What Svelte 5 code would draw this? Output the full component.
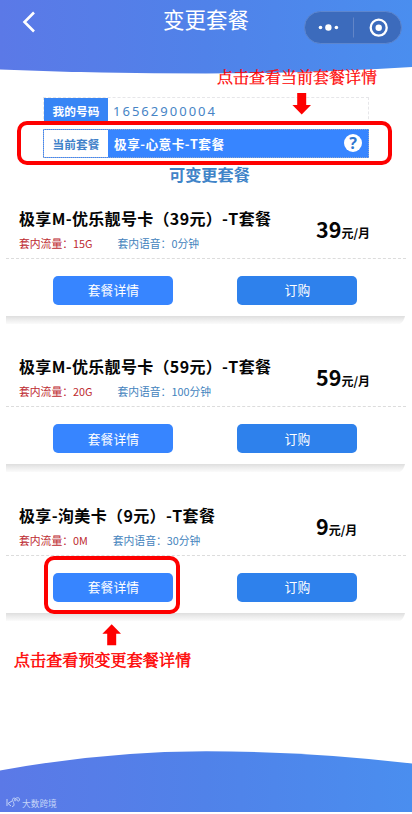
<script>
  const plans = [
    { name: '极享M-优乐靓号卡（39元）-T套餐', width: 252, data: '15G', voice: '0分钟', price: '39' },
    { name: '极享M-优乐靓号卡（59元）-T套餐', width: 252, data: '20G', voice: '100分钟', price: '59' },
    { name: '极享-洵美卡（9元）-T套餐', width: 196, data: '0M', voice: '30分钟', price: '9' }
  ];
</script>

<div class="page">
  <svg class="curve top" width="412" height="74" viewBox="0 0 412 74">
    <defs>
      <linearGradient id="sky" x1="0" y1="0" x2="1" y2="0">
        <stop offset="0" stop-color="#5b79e7" />
        <stop offset="0.5" stop-color="#5082e9" />
        <stop offset="1" stop-color="#4a8eef" />
      </linearGradient>
    </defs>
    <path d="M0 0H412V67Q310 73.5 206 73.5Q100 73.5 0 69.5Z" fill="url(#sky)" />
  </svg>
  <svg class="curve bottom" width="412" height="62" viewBox="0 0 412 62">
    <path d="M0 20.5Q104 1.3 206 1.3Q308 1.3 412 13.5V62H0Z" fill="url(#sky)" />
  </svg>

  <header>
    <svg class="back" width="14" height="22" viewBox="0 0 14 22">
      <path d="M12 1.5L2.5 11L12 20.5" fill="none" stroke="#fff" stroke-width="2.6" />
    </svg>
    <h1>变更套餐</h1>
    <svg class="capsule" width="98" height="33" viewBox="0 0 98 33">
      <rect x=".5" y=".5" width="97" height="32" rx="16" fill="#3c6bbc" stroke="#5d86ce" />
      <circle cx="16.5" cy="16.5" r="1.8" fill="#fff" />
      <circle cx="24.4" cy="16.5" r="3.2" fill="#fff" />
      <circle cx="32.4" cy="16.5" r="1.8" fill="#fff" />
      <path d="M49.5 6.5V26.5" stroke="#6285c7" />
      <circle cx="74.7" cy="16.7" r="8" fill="none" stroke="#fff" stroke-width="2.3" />
      <circle cx="74.7" cy="16.7" r="3.2" fill="#fff" />
    </svg>
  </header>

  <section class="account">
    <div class="row number">
      <span class="label">我的号码</span>
      <span class="value">16562900004</span>
    </div>
    <div class="row current">
      <span class="label">当前套餐</span>
      <span class="value">极享-心意卡-T套餐</span>
      <span class="help">?</span>
    </div>
  </section>

  <h2>可变更套餐</h2>

  <main>
    {#each plans as plan}
      <article>
        <div class="info">
          <div class="text">
            <svg class="name" width="254" height="24">
              <text x="0" y="18" textLength={plan.width} lengthAdjust="spacing">{plan.name}</text>
            </svg>
            <div class="meta">
              <span class="data">套内流量：{plan.data}</span>
              <span class="voice">套内语音：{plan.voice}</span>
            </div>
          </div>
          <div class="price"><b>{plan.price}</b>元/月</div>
        </div>
        <div class="actions">
          <button>套餐详情</button>
          <button class="order">订购</button>
        </div>
        <svg class="shade" width="400" height="8" viewBox="0 0 400 8">
          <defs>
            <linearGradient id="fade" x1="0" y1="0" x2="0" y2="1">
              <stop offset="0" stop-color="#dedede" />
              <stop offset=".4" stop-color="#ebebeb" />
              <stop offset="1" stop-color="#fbfbfb" />
            </linearGradient>
          </defs>
          <path d="M0 0H399Q398 5 394 8H0Z" fill="url(#fade)" />
        </svg>
      </article>
    {/each}
  </main>

  <div class="note note-top">点击查看当前套餐详情</div>
  <svg class="arrow down" width="20" height="22" viewBox="0 0 20 22">
    <path d="M5.2 0H14.2V12H19L9.7 21.5L.4 12H5.2Z" fill="#fe0000" />
  </svg>
  <div class="frame frame-top"></div>
  <div class="frame frame-bottom"></div>
  <svg class="arrow up" width="20" height="22" viewBox="0 0 20 22">
    <path d="M5.2 21.3H14.2V9.7H19L9.7 .3L.4 9.7H5.2Z" fill="#fe0000" />
  </svg>
  <div class="note note-bottom">点击查看预变更套餐详情</div>

  <div class="mark">
    <svg width="15" height="11" viewBox="0 0 15 11">
      <path d="M1 2V9M6 4L2 6.5L5 9M6 9.5C9 9.5 8 6 7 4.5C5 1 9 0 10 2.5C10 5 7 4 9 2C11 0 14 .5 13.5 3C13 5 10.5 4 11 2" fill="none" stroke="#c5d5f8" />
    </svg>
    <span>大数跨境</span>
  </div>
</div>

<style>
  :global(body) { margin: 0; background: #fff; }
  .page {
    position: relative;
    width: 412px;
    height: 814px;
    overflow: hidden;
    background: #fff;
    font-family: "Noto Sans CJK SC", sans-serif;
  }
  .curve { position: absolute; left: 0; display: block; }
  .top { top: 0; }
  .bottom { top: 750px; }
  header {
    position: relative;
    height: 97px;
    display: flex;
    align-items: flex-start;
  }
  .back { margin: 11px 0 0 22px; }
  h1 {
    margin: 3px 0 0 127px;
    width: 86px;
    font-size: 21.5px;
    line-height: 31px;
    font-weight: 400;
    color: #fff;
    white-space: nowrap;
  }
  .capsule { margin: 11px 0 0 55px; }
  .account { margin-left: 43px; width: 326px; }
  .row { display: flex; box-sizing: border-box; border: 1px dashed #e6e6e9; }
  .number { height: 27px; border-bottom: 0; }
  .label {
    width: 64px;
    flex: none;
    text-align: center;
    font-size: 11.7px;
    font-weight: 700;
    line-height: 25px;
    color: #fff;
    background: #3785f5;
  }
  .number .value {
    padding-left: 5px;
    font: 13px/26px "Noto Sans", sans-serif;
    letter-spacing: 2.02px;
    color: #4684c6;
  }
  .current {
    height: 29px;
    margin-top: 5px;
    border: 1px dotted #91a8cd;
    align-items: stretch;
    background: #3785ff;
  }
  .current .label { background: #fff; color: #4182c9; line-height: 28px; }
  .current .value {
    flex: 1;
    padding-left: 6px;
    font-size: 12.7px;
    letter-spacing: .45px;
    font-weight: 700;
    line-height: 27px;
    color: #fff;
  }
  .help {
    width: 18px;
    height: 18px;
    margin: 4px 6px 0 0;
    border-radius: 50%;
    background: #fff;
    color: #2f77cf;
    font: 700 16px/18px "Noto Sans", sans-serif;
    text-align: center;
  }
  h2 {
    margin: 3px 0 0 169px;
    font-size: 16.2px;
    line-height: 26px;
    font-weight: 700;
    color: #4084c8;
  }
  main { margin: 19.5px 0 0 6px; width: 400px; }
  article { height: 148.5px; }
  .info {
    display: flex;
    height: 52px;
    box-sizing: border-box;
    border-bottom: 1px dashed #dcdcdc;
    padding-left: 13px;
  }
  .text { width: 297px; flex: none; }
  .name { display: block; overflow: visible; }
  .name text { font-size: 16px; font-weight: 700; fill: #050505; }
  .meta {
    display: flex;
    gap: 25px;
    font-size: 10.8px;
    line-height: 16px;
    margin-top: 4px;
    white-space: nowrap;
  }
  .data { color: #bd2930; }
  .voice { color: #4383bd; }
  .price { font-size: 12px; font-weight: 700; line-height: 32px; color: #050505; padding-top: 6px; white-space: nowrap; }
  .price b { font-size: 21.5px; font-weight: 700; }
  .actions { display: flex; gap: 64px; padding: 17px 0 0 47.4px; height: 41px; box-sizing: content-box; }
  button {
    width: 120px;
    height: 29px;
    padding: 0;
    border: 0;
    border-radius: 5px;
    background: #3785ff;
    color: #fff;
    font: 400 12.8px/28px "Noto Sans CJK SC", sans-serif;
  }
  .order { background: #2e81ec; }
  .shade { display: block; margin-top: -1px; }
  .note {
    position: absolute;
    color: #fe0000;
    font: 400 16px/22px "Liberation Serif", "Noto Serif CJK SC", "Noto Sans CJK SC", serif;
    white-space: nowrap;
    -webkit-text-stroke: .25px #fe0000;
  }
  .note-top { left: 217px; top: 67px; }
  .note-bottom { left: 14px; top: 650px; letter-spacing: .1px; -webkit-text-stroke: .5px #fe0000; }
  .arrow { position: absolute; display: block; }
  .down { left: 292px; top: 93px; }
  .up { left: 102px; top: 624px; }
  .frame { position: absolute; box-sizing: border-box; border: 4.5px solid #fe0000; border-radius: 10px; }
  .frame-top { left: 17px; top: 121px; width: 375px; height: 44px; }
  .frame-bottom { left: 44px; top: 556px; width: 136px; height: 58px; }
  .mark {
    position: absolute;
    left: 6px;
    top: 797px;
    display: flex;
    gap: 1px;
    color: #c5d5f8;
    font-size: 8.7px;
    line-height: 14px;
  }
</style>
